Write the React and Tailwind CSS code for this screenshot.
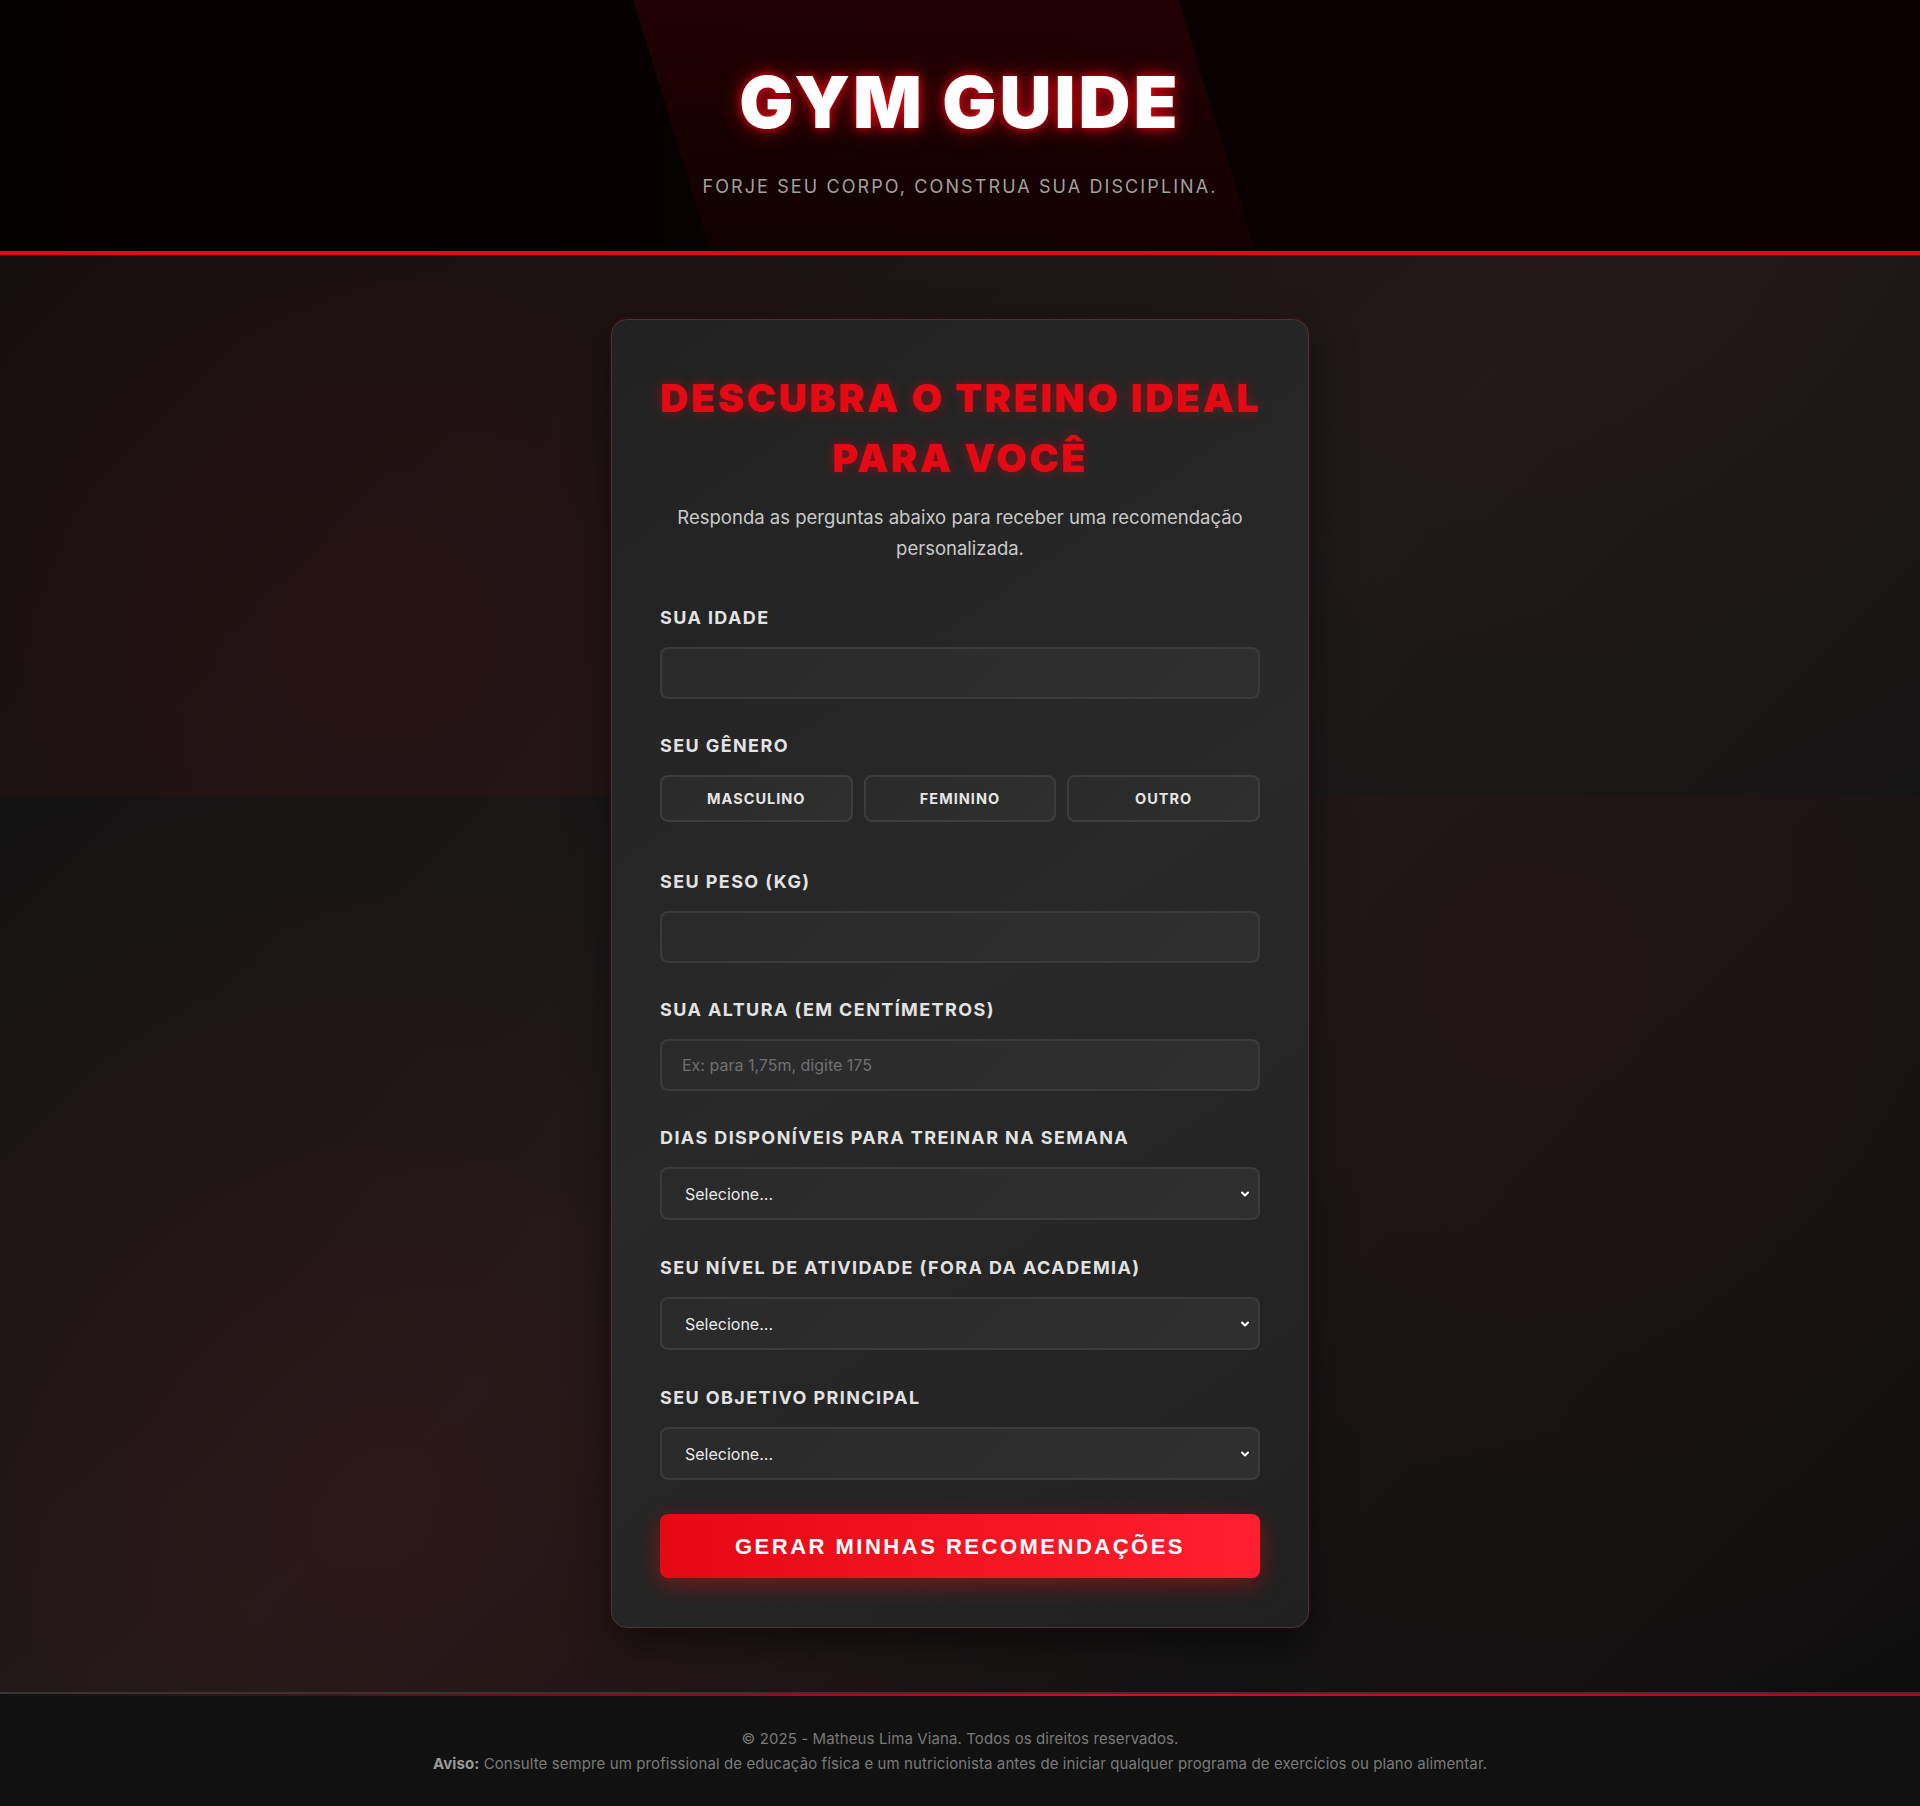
import { ChevronDown } from "lucide-react";

const labelCls =
  "block text-[18px] leading-6 font-bold uppercase tracking-[1.4px] text-[#e2e2e2] mb-[17px]";
const fieldCls =
  "w-full h-[52px] rounded-lg border-2 border-[#3b3b3b] bg-[linear-gradient(135deg,#2a2a2a,#2f2f2f)] px-5 text-[16px] text-[#e5e5e5] placeholder:text-[#707070] outline-none";

const SelectField = ({ label, last }) => (
  <div className={last ? "mb-[34px]" : "mb-[36px]"}>
    <label className={labelCls}>{label}</label>
    <div className="relative">
      <select className="w-full h-[53px] appearance-none rounded-lg border-2 border-[#3b3b3b] bg-[linear-gradient(135deg,#2a2a2a,#2f2f2f)] pl-[23px] pr-10 text-[16px] text-[#e8e8e8] outline-none">
        <option>Selecione...</option>
      </select>
      <ChevronDown
        className="absolute right-[9px] top-1/2 -translate-y-1/2 w-3 h-3 text-white pointer-events-none"
        strokeWidth={4}
      />
    </div>
  </div>
);

export default function App() {
  return (
    <div className="min-h-screen font-['Inter',sans-serif] bg-[#141414] bg-no-repeat bg-[radial-gradient(circle_at_20%_80%,rgba(229,9,20,0.09)_0%,transparent_50%),radial-gradient(circle_at_80%_20%,rgba(229,9,20,0.06)_0%,transparent_50%),radial-gradient(circle_at_20%_80%,rgba(229,9,20,0.09)_0%,transparent_50%),radial-gradient(circle_at_80%_20%,rgba(229,9,20,0.06)_0%,transparent_50%),linear-gradient(135deg,#0c0c0c_0%,#1a1a1a_50%,#0d0d0d_100%)] bg-[length:100%_796px,100%_796px,100%_900px,100%_900px,100%_100%] bg-[position:0_0,0_0,0_796px,0_796px,0_0]">
      {/* Header */}
      <header className="relative overflow-hidden bg-[linear-gradient(90deg,#050000,#0b0002)] border-b-4 border-[#e50914] h-[255px]">
        <div className="absolute top-0 bottom-0 left-[672px] w-[545px] skew-x-[17deg] bg-[linear-gradient(180deg,rgba(229,9,20,0.12),rgba(229,9,20,0.04))]" />
        <div className="relative text-center pt-[66px]">
          <h1 className="text-[72px] leading-[72px] font-black text-white tracking-[3px] [text-shadow:0_0_10px_#e50914,0_0_22px_rgba(229,9,20,0.6)]">
            GYM GUIDE
          </h1>
          <p className="mt-[35px] text-[18px] leading-[27px] text-[#a0a0a0] tracking-[2.1px] uppercase">
            Forje seu corpo, construa sua disciplina.
          </p>
        </div>
      </header>

      {/* Main */}
      <main className="py-16 px-4">
        <div className="mx-auto w-[698px] rounded-2xl border border-[#3a3a3a] bg-[linear-gradient(145deg,#212121_0%,#292929_50%,#202020_100%)] px-12 pt-12 pb-[49px] shadow-[0_15px_40px_rgba(0,0,0,0.55),0_0_0_2px_rgba(90,15,18,0.35)]">
          <h2 className="text-center text-[39px] leading-[60px] font-black uppercase tracking-[2.8px] text-[#e50914] [text-shadow:0_0_12px_rgba(229,9,20,0.45)]">
            <span className="block whitespace-nowrap">Descubra o treino ideal</span>
            <span className="block whitespace-nowrap">para você</span>
          </h2>
          <p className="mt-[14px] mb-[42px] text-center text-[18.5px] leading-[31px] text-[#c9c9c9]">
            Responda as perguntas abaixo para receber uma recomendação personalizada.
          </p>

          <div className="mb-[35px]">
            <label className={labelCls}>Sua idade</label>
            <input type="number" className={fieldCls} />
          </div>

          <div className="mb-[48px]">
            <label className={labelCls}>Seu gênero</label>
            <div className="grid grid-cols-3 gap-[11px]">
              {["Masculino", "Feminino", "Outro"].map((g) => (
                <button
                  key={g}
                  className="h-[47px] rounded-lg border-2 border-[#3d3d3d] bg-[linear-gradient(135deg,#2a2a2a,#2f2f2f)] text-[14.5px] font-bold uppercase tracking-[1px] text-[#e5e5e5]"
                >
                  {g}
                </button>
              ))}
            </div>
          </div>

          <div className="mb-[35px]">
            <label className={labelCls}>Seu peso (kg)</label>
            <input type="number" className={fieldCls} />
          </div>

          <div className="mb-[35px]">
            <label className={labelCls}>Sua altura (em centímetros)</label>
            <input
              type="number"
              placeholder="Ex: para 1,75m, digite 175"
              className={fieldCls}
            />
          </div>

          <SelectField label="Dias disponíveis para treinar na semana" />
          <SelectField label="Seu nível de atividade (fora da academia)" />
          <SelectField label="Seu objetivo principal" last />

          <button className="w-full h-[64px] rounded-lg bg-[linear-gradient(90deg,#e50914,#ff1f2e)] font-['Liberation_Sans',sans-serif] text-[22px] font-bold uppercase tracking-[2.5px] text-white shadow-[0_6px_22px_rgba(229,9,20,0.45)]">
            Gerar minhas recomendações
          </button>
        </div>
      </main>

      {/* Footer */}
      <footer className="relative border-t-2 border-[#353535] bg-[#111111] pt-[32px] pb-[34px] text-center text-[15px] leading-[25px] tracking-[0.1px] text-[#7a7a7a]">
        <div className="absolute top-0 left-0 right-0 h-[2px] bg-[linear-gradient(90deg,transparent,#e50914_60%,#b00710)]" />
        <p>© 2025 - Matheus Lima Viana. Todos os direitos reservados.</p>
        <p>
          <strong className="text-[#9a9a9a]">Aviso:</strong> Consulte sempre um profissional de educação física e um nutricionista antes de iniciar qualquer programa de exercícios ou plano alimentar.
        </p>
      </footer>
    </div>
  );
}
